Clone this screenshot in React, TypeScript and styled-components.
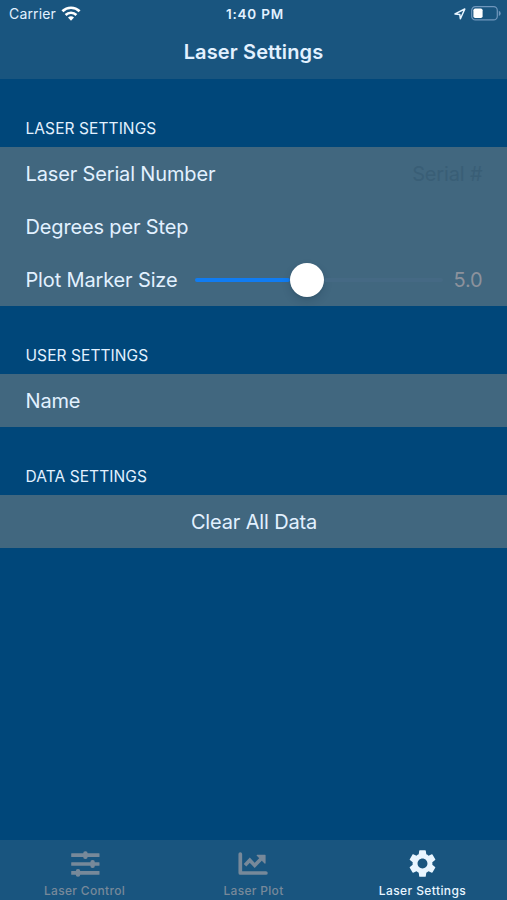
import React from "react";
import styled, { createGlobalStyle } from "styled-components";
import { MdSettings } from "react-icons/md";

const GlobalStyle = createGlobalStyle`
  * { box-sizing: border-box; }
  body { margin: 0; background: #00477a; font-family: Inter, "Liberation Sans", sans-serif; }
`;

const Screen = styled.div`
  display: flex;
  flex-direction: column;
  width: 507px;
  height: 900px;
  background: #00477a;
  color: #e2f1ff;
  overflow: hidden;
`;

const Header = styled.header`
  height: 79px;
  flex: none;
  background: #19557f;
`;

const StatusBar = styled.div`
  display: grid;
  grid-template-columns: 1fr auto 1fr;
  align-items: center;
  height: 27px;
  padding: 0 6px 0 9px;
  font-size: 14px;
`;

const Carrier = styled.div`
  display: flex;
  align-items: center;
  gap: 5px;
  letter-spacing: 0.15px;
`;

const Clock = styled.div`
  font-weight: 600;
  font-size: 13.5px;
  letter-spacing: 0.8px;
`;

const Indicators = styled.div`
  display: flex;
  justify-content: flex-end;
  align-items: center;
  gap: 5px;
`;

const Title = styled.h1`
  margin: 0;
  height: 51px;
  line-height: 51px;
  text-align: center;
  font-size: 20px;
  font-weight: 600;
  letter-spacing: 0.13px;
`;

const Content = styled.main`
  flex: 1;
`;

const SectionTitle = styled.h2`
  margin: 0;
  height: 68px;
  padding: 40px 25.5px 0;
  font-size: 15.5px;
  line-height: 20px;
  font-weight: 400;
  letter-spacing: 0.08px;
`;

const Group = styled.div`
  background: #41677f;
`;

const Row = styled.div<{ $center?: boolean }>`
  display: flex;
  align-items: center;
  justify-content: ${(p) => (p.$center ? "center" : "space-between")};
  height: 53px;
  padding: 0 24.5px 0 25.5px;
  font-size: 20px;
  letter-spacing: -0.15px;
`;

const Label = styled.span`
  white-space: nowrap;
`;

const Placeholder = styled.span`
  color: #395e76;
`;

const Value = styled.span`
  color: #8c929c;
`;

const Slider = styled.div`
  display: flex;
  align-items: center;
  width: 248px;
  margin-left: auto;
  margin-right: 10px;
`;

const Track = styled.div<{ $filled?: boolean }>`
  flex: ${(p) => (p.$filled ? "0 0 95px" : "1")};
  height: 4px;
  border-radius: 2px;
  background: ${(p) => (p.$filled ? "#107cf2" : "#456984")};
`;

const Thumb = styled.div`
  flex: none;
  width: 34px;
  height: 34px;
  border-radius: 50%;
  background: #fff;
  box-shadow: 0 4px 9px rgba(0, 30, 50, 0.16), 0 1px 2px rgba(0, 30, 50, 0.12);
`;

const TabBar = styled.nav`
  display: grid;
  grid-template-columns: repeat(3, 1fr);
  height: 60px;
  flex: none;
  background: #19557f;
`;

const Tab = styled.div<{ $active?: boolean }>`
  display: flex;
  flex-direction: column;
  align-items: center;
  color: ${(p) => (p.$active ? "#e8f5ff" : "#77899a")};
  font-size: 12px;
  line-height: 16px;
  font-weight: 500;
  letter-spacing: ${(p) => (p.$active ? "0.4px" : "0.32px")};
`;

const TabIcon = styled.div`
  display: flex;
  align-items: center;
  justify-content: center;
  height: 43px;
  padding-top: 4px;
`;

const WifiIcon = () => (
  <svg width="20" height="15" viewBox="0 0 20 15">
    <g fill="none" stroke="#fff" strokeWidth="2.7">
      <path d="M1.4 5.2a12.4 12.4 0 0 1 17.2 0" />
      <path d="M4.6 8.9a7.9 7.9 0 0 1 10.8 0" />
    </g>
    <path d="M7 11.6a4.3 4.3 0 0 1 6 0l-3 3.1z" fill="#fff" />
  </svg>
);

const LocationIcon = () => (
  <svg width="12" height="12" viewBox="0 0 12 12">
    <path d="M1 5.9 10.8 1 6.4 10.8 5.8 6.4z" fill="none" stroke="#e8f5ff" strokeWidth="1.5" strokeLinejoin="round" />
  </svg>
);

const BatteryIcon = () => (
  <svg width="30" height="15" viewBox="0 0 30 15">
    <rect x=".7" y=".7" width="25.6" height="13.2" rx="3.7" fill="none" stroke="#7097bd" strokeWidth="1.2" />
    <rect x="2.4" y="2.5" width="9.2" height="9.6" rx="1.8" fill="#fff" />
    <path d="M27.8 4.8v5.2q1.9-.8 1.9-2.6t-1.9-2.6" fill="#7097bd" />
  </svg>
);

const SlidersIcon = () => (
  <svg width="30" height="28" viewBox="0 0 30 28" fill="currentColor">
    <rect x="1.2" y="3.3" width="28.3" height="3.6" rx=".5" />
    <rect x="1.2" y="12.2" width="28.3" height="3.6" rx=".5" />
    <rect x="1.2" y="21.1" width="28.3" height="3.6" rx=".5" />
    <rect x="13.2" y="1.2" width="4.4" height="7.8" rx="2" />
    <rect x="20.4" y="10.1" width="4.4" height="7.8" rx="2" />
    <rect x="5.8" y="19" width="4.4" height="7.8" rx="2" />
  </svg>
);

const ChartIcon = () => (
  <svg width="31" height="24" viewBox="0 0 31 24" fill="none" stroke="currentColor">
    <path d="M2.3 2v19h25.6" strokeWidth="3.7" strokeLinecap="round" strokeLinejoin="round" />
    <path d="m7 13.2 4.8-5 4.9 5.2 7-7.2" strokeWidth="3.6" />
    <path d="M19.2 3.3h7.8v7.8z" fill="currentColor" strokeWidth="1.2" strokeLinejoin="round" />
  </svg>
);

export default function App() {
  return (
    <Screen>
      <GlobalStyle />
      <Header>
        <StatusBar>
          <Carrier>
            Carrier
            <WifiIcon />
          </Carrier>
          <Clock>1:40 PM</Clock>
          <Indicators>
            <LocationIcon />
            <BatteryIcon />
          </Indicators>
        </StatusBar>
        <Title>Laser Settings</Title>
      </Header>
      <Content>
        <SectionTitle>LASER SETTINGS</SectionTitle>
        <Group>
          <Row>
            <Label>Laser Serial Number</Label>
            <Placeholder>Serial #</Placeholder>
          </Row>
          <Row>
            <Label>Degrees per Step</Label>
          </Row>
          <Row>
            <Label>Plot Marker Size</Label>
            <Slider>
              <Track $filled />
              <Thumb />
              <Track />
            </Slider>
            <Value>5.0</Value>
          </Row>
        </Group>
        <SectionTitle>USER SETTINGS</SectionTitle>
        <Group>
          <Row>
            <Label>Name</Label>
          </Row>
        </Group>
        <SectionTitle>DATA SETTINGS</SectionTitle>
        <Group>
          <Row $center>
            <Label>Clear All Data</Label>
          </Row>
        </Group>
      </Content>
      <TabBar>
        <Tab>
          <TabIcon>
            <SlidersIcon />
          </TabIcon>
          Laser Control
        </Tab>
        <Tab>
          <TabIcon>
            <ChartIcon />
          </TabIcon>
          Laser Plot
        </Tab>
        <Tab $active>
          <TabIcon>
            <MdSettings size={33} />
          </TabIcon>
          Laser Settings
        </Tab>
      </TabBar>
    </Screen>
  );
}
